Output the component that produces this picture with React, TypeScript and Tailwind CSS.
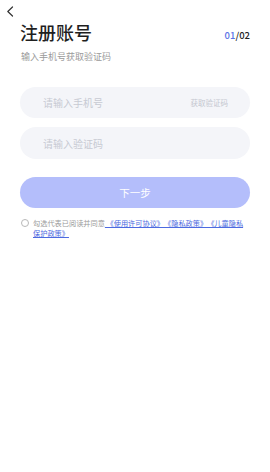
import React from "react";

export default function App() {
  return (
    <div className="w-[270px] h-[472px] bg-white font-['Noto_Sans_CJK_SC',sans-serif] text-[#1f1f1f]">
      <div className="pl-[6px] pt-[6px]">
        <svg width="8" height="11" viewBox="0 0 8 11" fill="none">
          <path d="M6.5 1 L1.8 5.5 L6.5 10" stroke="#333" strokeWidth="1.2" strokeLinecap="round" strokeLinejoin="round" />
        </svg>
      </div>

      <div className="mt-[4px] flex items-center justify-between px-[20px]">
        <h1 className="text-[18px] leading-[22px] font-medium">注册账号</h1>
        <div className="mt-[5px] text-[9.5px] leading-[12px] font-medium">
          <span className="text-[#5a72e6]">01</span>
          <span className="text-[#222]">/02</span>
        </div>
      </div>

      <p className="mt-[8px] px-[21px] text-[9px] leading-[12px] text-[#9a9a9a]">输入手机号获取验证码</p>

      <div className="mt-[24px] flex flex-col gap-[9px] px-[20px]">
        <div className="flex h-[31px] items-center rounded-full bg-[#f4f5f9] pl-[23px] pr-[22px]">
          <input
            placeholder="请输入手机号"
            className="min-w-0 flex-1 bg-transparent text-[10px] outline-none placeholder:text-[#c7cad3]"
          />
          <span className="text-[7.5px] text-[#c4c7d0]">获取验证码</span>
        </div>
        <div className="flex h-[32px] items-center rounded-full bg-[#f4f5f9] pl-[23px] pr-[22px]">
          <input
            placeholder="请输入验证码"
            className="min-w-0 flex-1 bg-transparent text-[10px] outline-none placeholder:text-[#c7cad3]"
          />
        </div>
      </div>

      <div className="mt-[18px] px-[20px]">
        <button className="flex h-[31px] w-full items-center justify-center rounded-full bg-[#b4befb] text-[10.5px] text-white">
          下一步
        </button>
      </div>

      <div className="mt-[10px] flex items-start gap-[4px] pl-[21px] pr-[22px]">
        <span className="mt-[1px] h-[8px] w-[8px] shrink-0 rounded-full border border-[#b8b8b8]" />
        <p className="text-[7.2px] leading-[10px] text-[#9a9a9a] [text-spacing-trim:space-all]">
          勾选代表已阅读并同意
          <span className="text-[#4c6ae0] underline"> 《使用许可协议》《隐私政策》《儿童隐私保护政策》</span>
        </p>
      </div>
    </div>
  );
}
